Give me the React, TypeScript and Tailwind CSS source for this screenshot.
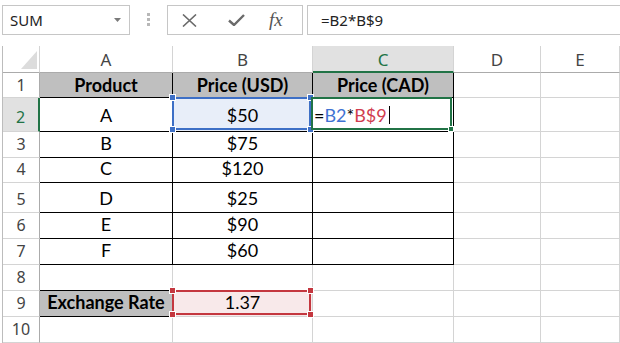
import React from "react";

const cellFont = "font-['Lato',sans-serif] text-[18px] leading-[18px]";
const headFont = "font-['Noto_Sans',sans-serif] text-[16px] leading-[16px]";

type CellProps = {
  children?: React.ReactNode;
  className?: string;
};

function Cell({ children, className = "" }: CellProps) {
  return (
    <div className={`relative flex items-end justify-center border-r border-b ${cellFont} text-black ${className}`}>
      {children}
    </div>
  );
}

function Handle({ pos, color }: { pos: string; color: string }) {
  return <div className={`absolute z-20 h-[7px] w-[7px] border border-white ${color} ${pos}`} />;
}

function RangeBox({ border, fill }: { border: string; fill: string }) {
  return (
    <div className={`absolute -left-[1px] -top-[1px] right-[1px] bottom-[1px] z-10 border-2 ${border}`}>
      <Handle pos="-left-[5px] -top-[5px]" color={fill} />
      <Handle pos="-right-[5px] -top-[5px]" color={fill} />
      <Handle pos="-left-[5px] -bottom-[5px]" color={fill} />
      <Handle pos="-right-[5px] -bottom-[5px]" color={fill} />
    </div>
  );
}

function RowHead({ n, active, pb }: { n: number; active?: boolean; pb: string }) {
  return (
    <div
      className={
        active
          ? `flex items-end justify-center border-r-2 border-b border-r-[#217346] border-b-[#d4d4d4] bg-[#e1e1e1] ${pb} ${headFont} text-[#217346]`
          : `flex items-end justify-center border-r border-b border-r-[#ababab] border-b-[#d4d4d4] ${pb} ${headFont} text-[#444]`
      }
    >
      {n}
    </div>
  );
}

function ColHead({ label, active }: { label: string; active?: boolean }) {
  return (
    <div
      className={
        active
          ? `flex items-end justify-center border-r border-b-2 border-r-[#d4d4d4] border-b-[#217346] bg-[#e1e1e1] pb-[3px] ${headFont} text-[17px] text-[#217346]`
          : `flex items-end justify-center border-r border-b border-r-[#d4d4d4] border-b-[#ababab] pb-[4px] ${headFont} text-[17px] text-[#444]`
      }
    >
      {label}
    </div>
  );
}

const products = [
  { n: 3, name: "B", price: "$75" },
  { n: 4, name: "C", price: "$120" },
  { n: 5, name: "D", price: "$25" },
  { n: 6, name: "E", price: "$90" },
  { n: 7, name: "F", price: "$60" },
];

const table = "border-black";
const grid = "border-[#d4d4d4]";

export default function App() {
  return (
    <div className="h-[343px] w-[620px] overflow-hidden bg-white">
      {/* formula bar */}
      <div className="flex h-[46px] items-start pl-[2px] pt-[5px] font-['Noto_Sans',sans-serif]">
        <div className="flex h-[30px] w-[128px] items-center justify-between border border-[#c6c6c6] pl-[7px] pr-[8px]">
          <span className="text-[15px] text-[#222]">SUM</span>
          <svg width="7" height="4" viewBox="0 0 7 4">
            <path d="M0 0h7L3.5 4z" fill="#7a7a7a" />
          </svg>
        </div>
        <div className="ml-[17px] mt-[8px] flex flex-col gap-[2px]">
          <div className="h-[3px] w-[3px] bg-[#b8b8b8]" />
          <div className="h-[3px] w-[3px] bg-[#b8b8b8]" />
          <div className="h-[3px] w-[3px] bg-[#b8b8b8]" />
        </div>
        <div className="ml-[17px] flex h-[30px] w-[136px] items-center border border-[#c6c6c6] pl-[14px]">
          <svg width="15" height="13" viewBox="0 0 15 13">
            <path d="M1 0.5L14 12.5M14 0.5L1 12.5" stroke="#6a6a6a" strokeWidth="1.6" fill="none" />
          </svg>
          <svg className="ml-[31px]" width="17" height="12" viewBox="0 0 17 12">
            <path d="M1 6.5L6 11L16 1" stroke="#6a6a6a" strokeWidth="2.4" fill="none" />
          </svg>
          <span className="ml-[24px] font-['Liberation_Serif',serif] text-[19px] italic text-[#555]">fx</span>
        </div>
        <div className="-mr-[4px] ml-[4px] flex h-[30px] flex-1 items-center border-y border-l border-[#c6c6c6] pl-[13px] text-[15px] text-[#222]">
          =B2*B$9
        </div>
      </div>

      {/* sheet */}
      <div className="ml-[2px] border-l border-[#bcbcbc]">
        <div className="grid grid-cols-[37px_133px_140px_141px_87px_1fr] grid-rows-[27px_25px_34px_26px_25px_30px_26px_26px_26px_26px_26px]">
          {/* column headers */}
          <div className="relative border-r border-b border-r-[#d4d4d4] border-b-[#ababab]">
            <svg className="absolute right-[2px] bottom-[3px]" width="16" height="18" viewBox="0 0 16 18">
              <path d="M16 0V18H0z" fill="#dcdcdc" />
            </svg>
          </div>
          <ColHead label="A" />
          <ColHead label="B" />
          <ColHead label="C" active />
          <ColHead label="D" />
          <ColHead label="E" />

          {/* row 1 */}
          <RowHead n={1} pb="pb-[4px]" />
          <Cell className={`${table} bg-[#bfbfbf] pb-[3px] font-bold`}>Product</Cell>
          <Cell className={`${table} bg-[#bfbfbf] pb-[3px] font-bold`}>Price (USD)</Cell>
          <Cell className={`${table} bg-[#bfbfbf] pb-[3px] font-bold`}>Price (CAD)</Cell>
          <Cell className={grid} />
          <Cell className={grid} />

          {/* row 2 */}
          <RowHead n={2} active pb="pb-[6px]" />
          <Cell className={`${table} pb-[7px]`}>A</Cell>
          <Cell className={`${table} bg-[#e8eef9] pb-[7px]`}>
            $50
            <RangeBox border="border-[#3d6fc6]" fill="bg-[#3d6fc6]" />
          </Cell>
          <Cell className={`${table} justify-start pb-[7px] pl-[1px]`}>
            <span>=</span>
            <span className="text-[#3f73d3]">B2</span>
            <span>*</span>
            <span className="text-[#d13d4f]">B$9</span>
            <span className="ml-[2px] h-[18px] w-[1px] bg-black" />
            <div className="absolute -left-[2px] -top-[1px] right-[1px] bottom-[1px] z-10 border-2 border-[#217346]">
              <div className="absolute -right-[4px] -bottom-[4px] h-[6px] w-[6px] border border-white bg-[#217346]" />
            </div>
          </Cell>
          <Cell className={grid} />
          <Cell className={grid} />

          {/* rows 3-7 */}
          {products.map((p) => (
            <React.Fragment key={p.n}>
              <RowHead n={p.n} pb="pb-[5px]" />
              <Cell className={`${table} pb-[5px]`}>{p.name}</Cell>
              <Cell className={`${table} pb-[5px]`}>{p.price}</Cell>
              <Cell className={table} />
              <Cell className={grid} />
              <Cell className={grid} />
            </React.Fragment>
          ))}

          {/* row 8 */}
          <RowHead n={8} pb="pb-[5px]" />
          <Cell className="border-r-[#d4d4d4] border-b-black" />
          <Cell className={grid} />
          <Cell className={grid} />
          <Cell className={grid} />
          <Cell className={grid} />

          {/* row 9 */}
          <RowHead n={9} pb="pb-[5px]" />
          <Cell className="border-r-[#d4d4d4] border-b-black bg-[#bfbfbf] pb-[5px] font-bold">Exchange Rate</Cell>
          <Cell className={`${grid} bg-[#f8e9ea] pb-[5px]`}>
            1.37
            <RangeBox border="border-[#c4373f]" fill="bg-[#c4373f]" />
          </Cell>
          <Cell className={grid} />
          <Cell className={grid} />
          <Cell className={grid} />

          {/* row 10 */}
          <RowHead n={10} pb="pb-[5px]" />
          <Cell className={grid} />
          <Cell className={grid} />
          <Cell className={grid} />
          <Cell className={grid} />
          <Cell className={grid} />
        </div>
      </div>
    </div>
  );
}
